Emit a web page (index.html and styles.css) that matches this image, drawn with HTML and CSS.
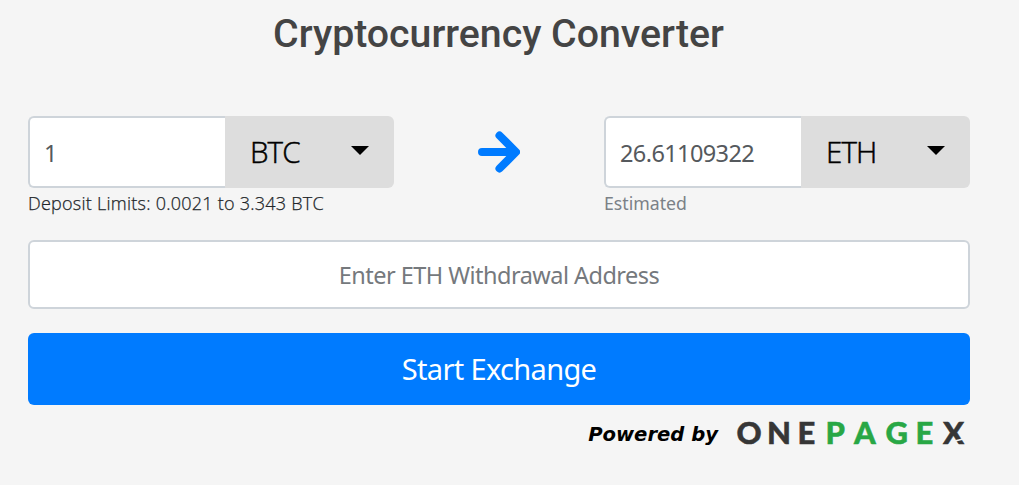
FILE: index.html
```html
<!DOCTYPE html>
<html lang="en">
<head>
    <meta charset="UTF-8">
    <meta name="viewport" content="width=device-width, initial-scale=1.0">
    <title>Cryptocurrency Converter</title>
    <link rel="stylesheet" href="styles.css">
</head>
<body>
    <h1>Cryptocurrency Converter</h1>
    <div class="converter">
        <div class="exchange-row">
            <div class="amount-col">
                <div class="input-group">
                    <input type="text" class="amount" id="depositAmount" value="1">
                    <button class="coin"><span class="coin-name">BTC</span><span class="caret"></span></button>
                </div>
                <div class="hint limits">Deposit Limits: 0.0021 to 3.343 BTC</div>
            </div>
            <svg class="arrow" viewBox="0 0 42 42" width="42" height="42">
                <path d="M4 21H36M21.5 4.5L38 21L21.5 37.5"/>
            </svg>
            <div class="amount-col">
                <div class="input-group">
                    <input type="text" class="amount" id="receiveAmount" value="26.61109322">
                    <button class="coin"><span class="coin-name">ETH</span><span class="caret"></span></button>
                </div>
                <div class="hint estimated">Estimated</div>
            </div>
        </div>
        <input type="text" class="address" placeholder="Enter ETH Withdrawal Address">
        <button class="start-btn">Start Exchange</button>
        <div class="powered">
            <span class="powered-text">Powered by</span>
            <svg class="logo" viewBox="0 0 234 44" width="234" height="44">
                <text class="dark" y="32.5" x="0.5 31 61.5">ONE</text>
                <text class="green" y="32.5" x="89.5 118 149.5 179.5">PAGE</text>
                <text class="dark" y="32.5" x="207">X</text>
                <path class="cut" d="M219 30L229 27.5"/>
            </svg>
        </div>
    </div>
</body>
</html>
```

FILE: styles.css
```css
* {
    box-sizing: border-box;
}
body {
    margin: 0;
    background-color: #f5f5f5;
    font-family: "Noto Sans", "Open Sans", sans-serif;
}
h1 {
    margin: 0;
    padding: 10px 0 0;
    width: 997px;
    text-align: center;
    font-family: Roboto, sans-serif;
    font-size: 39.25px;
    font-weight: 500;
    line-height: 48px;
    color: #444;
}
.converter {
    width: 942px;
    margin: 58px 0 0 28px;
}
.exchange-row {
    display: flex;
    justify-content: space-between;
    align-items: flex-start;
}
.amount-col {
    width: 366px;
}
.input-group {
    display: flex;
    height: 72px;
}
.amount {
    width: 197px;
    padding: 2px 14px 0;
    border: 2px solid #ced4da;
    border-right: 0;
    border-radius: 6px 0 0 6px;
    background-color: #fff;
    font-family: inherit;
    font-size: 23.5px;
    letter-spacing: -0.6px;
    color: #55595d;
}
.coin {
    display: flex;
    justify-content: space-between;
    align-items: center;
    width: 169px;
    padding: 0 25px 2px;
    border: 0;
    border-radius: 0 6px 6px 0;
    background-color: #ddd;
    font-family: "Open Sans", sans-serif;
    font-size: 29.5px;
    font-weight: 300;
    color: #000;
}
.coin-name {
    letter-spacing: -0.9px;
    -webkit-text-stroke: 0.5px #000;
}
.caret {
    border-top: 9px solid #000;
    border-left: 9px solid transparent;
    border-right: 9px solid transparent;
    margin-top: -1px;
}
.arrow {
    margin-top: 15px;
    fill: none;
    stroke: #007bff;
    stroke-width: 8;
    stroke-linecap: round;
    stroke-linejoin: round;
}
.hint {
    height: 30px;
    margin-bottom: 2px;
    line-height: 30px;
    font-size: 18px;
    white-space: nowrap;
}
.limits {
    font-family: "Open Sans", sans-serif;
    font-weight: 300;
    letter-spacing: 0.25px;
    color: #212529;
    -webkit-text-stroke: 0.25px #212529;
}
.estimated {
    font-size: 17.7px;
    color: #7b8187;
}
.address {
    display: block;
    width: 100%;
    height: 69px;
    margin-top: 20px;
    padding: 0 15px;
    border: 2px solid #ced4da;
    border-radius: 6px;
    background-color: #fff;
    font-family: inherit;
    font-size: 23.5px;
    letter-spacing: -0.53px;
    text-align: center;
}
.address::placeholder {
    color: #75797d;
}
.start-btn {
    display: block;
    width: 100%;
    height: 72px;
    margin-top: 24px;
    padding: 0 0 2px;
    border: 0;
    border-radius: 6px;
    background-color: #007bff;
    font-family: inherit;
    font-size: 29px;
    letter-spacing: -0.65px;
    color: #fff;
}
.powered {
    display: flex;
    justify-content: flex-end;
    align-items: center;
    margin-top: 6px;
}
.powered-text {
    margin: 2px 18px 0 0;
    font-family: "DejaVu Sans", sans-serif;
    font-size: 19.6px;
    font-weight: bold;
    font-style: italic;
    color: #000;
}
.logo {
    font-family: Lato, sans-serif;
    font-size: 31px;
    font-weight: 900;
}
.logo .dark {
    fill: #363636;
    stroke: #363636;
    stroke-width: 0.5;
}
.logo .green {
    fill: #28a745;
    stroke: #28a745;
    stroke-width: 0.5;
}
.logo .cut {
    stroke: #f5f5f5;
    stroke-width: 1.3;
}
```
